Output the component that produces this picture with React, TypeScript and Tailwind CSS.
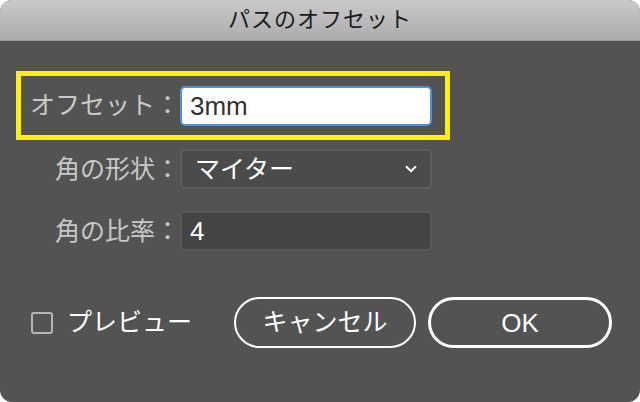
import { ChevronDown } from "lucide-react";

const font = { fontFamily: '"Liberation Sans", "Noto Sans CJK JP", sans-serif' };

function Row({ label, children }: { label: string; children: React.ReactNode }) {
  return (
    <div className="flex items-center w-[434px] h-[40px] px-[5px]">
      <div className="w-[159px] text-right text-[25px] text-[#c9c9c9] leading-none whitespace-nowrap">{label}</div>
      <div>{children}</div>
    </div>
  );
}

export default function App() {
  return (
    <div className="w-[640px] h-[402px] bg-white" style={font}>
      <div className="w-full h-full rounded-[12px] overflow-hidden bg-[#535353] flex flex-col">
        <div className="h-[41px] shrink-0 flex items-center justify-center bg-gradient-to-b from-[#cbc9cb] to-[#adabad] border-b border-[#9a989a]">
          <span className="text-[22px] text-[#1b1b1b] leading-none tracking-[1px]">パスのオフセット</span>
        </div>

        <div className="pl-[16px] pt-[30px]">
          <div className="flex items-center w-[434px] h-[69px] border-[5px] border-[#fff200]">
            <div className="w-[159px] text-right text-[25px] text-[#c9c9c9] leading-none whitespace-nowrap">オフセット：</div>
            <div className="w-[252px] h-[40px] rounded-[5px] bg-white border-2 border-[#4d93dc] flex items-center pl-[8px] text-[26px] text-[#333] leading-none">
              3mm
            </div>
          </div>

          <div className="mt-[9px]">
            <Row label="角の形状：">
              <div className="w-[252px] h-[40px] rounded-[5px] bg-[#4b4b4b] border-2 border-[#5c5c5c] flex items-center justify-between pl-[13px] pr-[10px] text-[25px] text-white leading-none">
                <span>マイター</span>
                <ChevronDown className="w-[18px] h-[18px]" strokeWidth={2.5} />
              </div>
            </Row>
          </div>

          <div className="mt-[22px]">
            <Row label="角の比率：">
              <div className="w-[252px] h-[40px] rounded-[5px] bg-[#444444] border-2 border-[#585858] flex items-center pl-[8px] text-[26px] text-white leading-none">
                4
              </div>
            </Row>
          </div>

          <div className="mt-[46px] flex items-center pr-[28px]">
            <div className="ml-[15px] w-[22px] h-[22px] rounded-[3px] border-2 border-[#b5b5b5]" />
            <span className="ml-[14px] text-[25px] text-white leading-none">プレビュー</span>
            <div className="flex-1" />
            <button className="w-[182px] h-[51px] rounded-full border-2 border-white text-[25px] text-white leading-none">
              キャンセル
            </button>
            <button className="ml-[12px] w-[184px] h-[51px] rounded-full border-[3px] border-white text-[26px] text-white leading-none">
              OK
            </button>
          </div>
        </div>
      </div>
    </div>
  );
}
